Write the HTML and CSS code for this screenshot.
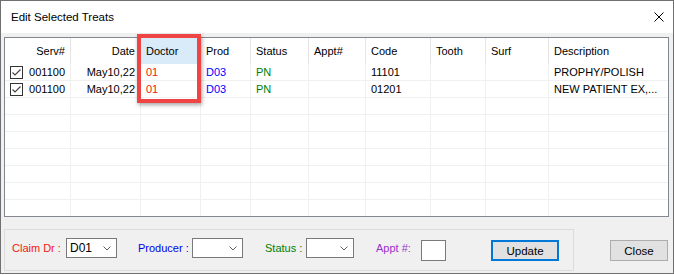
FILE: index.html
```html
<!DOCTYPE html>
<html>
<head>
<meta charset="utf-8">
<link rel="stylesheet" href="styles.css">
</head>
<body>
<div class="window">
  <div class="titlebar">
    <span class="title">Edit Selected Treats</span>
    <svg class="close-x" width="10" height="10" viewBox="0 0 10 10"><path d="M0.5 0.5 L9.5 9.5 M9.5 0.5 L0.5 9.5" stroke="#000" stroke-width="1" fill="none"/></svg>
  </div>
  <div class="content">
    <div class="grid">
      <div class="row header">
        <div class="cell right">Serv#</div>
        <div class="cell right">Date</div>
        <div class="cell sel">Doctor</div>
        <div class="cell">Prod</div>
        <div class="cell">Status</div>
        <div class="cell">Appt#</div>
        <div class="cell">Code</div>
        <div class="cell">Tooth</div>
        <div class="cell">Surf</div>
        <div class="cell">Description</div>
      </div>
      <div class="row">
        <div class="cell serv"><svg class="chk" width="13" height="13" viewBox="0 0 13 13"><rect x="0.5" y="0.5" width="12" height="12" fill="#fff" stroke="#333"/><path d="M2.5 6.5 L5 9 L10.5 3.5" stroke="#444" stroke-width="1.2" fill="none"/></svg><span>001100</span></div>
        <div class="cell right">May10,22</div>
        <div class="cell red">01</div>
        <div class="cell blue">D03</div>
        <div class="cell green">PN</div>
        <div class="cell"></div>
        <div class="cell">11101</div>
        <div class="cell"></div>
        <div class="cell"></div>
        <div class="cell">PROPHY/POLISH</div>
      </div>
      <div class="row">
        <div class="cell serv"><svg class="chk" width="13" height="13" viewBox="0 0 13 13"><rect x="0.5" y="0.5" width="12" height="12" fill="#fff" stroke="#333"/><path d="M2.5 6.5 L5 9 L10.5 3.5" stroke="#444" stroke-width="1.2" fill="none"/></svg><span>001100</span></div>
        <div class="cell right">May10,22</div>
        <div class="cell red">01</div>
        <div class="cell blue">D03</div>
        <div class="cell green">PN</div>
        <div class="cell"></div>
        <div class="cell">01201</div>
        <div class="cell"></div>
        <div class="cell"></div>
        <div class="cell">NEW PATIENT EX,...</div>
      </div>
      <div class="row"><div class="cell"></div><div class="cell"></div><div class="cell"></div><div class="cell"></div><div class="cell"></div><div class="cell"></div><div class="cell"></div><div class="cell"></div><div class="cell"></div><div class="cell"></div></div>
      <div class="row"><div class="cell"></div><div class="cell"></div><div class="cell"></div><div class="cell"></div><div class="cell"></div><div class="cell"></div><div class="cell"></div><div class="cell"></div><div class="cell"></div><div class="cell"></div></div>
      <div class="row"><div class="cell"></div><div class="cell"></div><div class="cell"></div><div class="cell"></div><div class="cell"></div><div class="cell"></div><div class="cell"></div><div class="cell"></div><div class="cell"></div><div class="cell"></div></div>
      <div class="row"><div class="cell"></div><div class="cell"></div><div class="cell"></div><div class="cell"></div><div class="cell"></div><div class="cell"></div><div class="cell"></div><div class="cell"></div><div class="cell"></div><div class="cell"></div></div>
      <div class="row"><div class="cell"></div><div class="cell"></div><div class="cell"></div><div class="cell"></div><div class="cell"></div><div class="cell"></div><div class="cell"></div><div class="cell"></div><div class="cell"></div><div class="cell"></div></div>
      <div class="row"><div class="cell"></div><div class="cell"></div><div class="cell"></div><div class="cell"></div><div class="cell"></div><div class="cell"></div><div class="cell"></div><div class="cell"></div><div class="cell"></div><div class="cell"></div></div>
      <div class="row"><div class="cell"></div><div class="cell"></div><div class="cell"></div><div class="cell"></div><div class="cell"></div><div class="cell"></div><div class="cell"></div><div class="cell"></div><div class="cell"></div><div class="cell"></div></div>
    </div>
    <div class="footer">
      <div class="groupbox">
        <span class="lbl lbl-claim">Claim Dr :</span>
        <div class="combo combo-claim"><span>D01</span><svg class="chev" width="8" height="5" viewBox="0 0 8 5"><path d="M0.5 0.5 L4 4 L7.5 0.5" stroke="#606060" fill="none"/></svg></div>
        <span class="lbl lbl-prod">Producer :</span>
        <div class="combo combo-prod"><span></span><svg class="chev" width="8" height="5" viewBox="0 0 8 5"><path d="M0.5 0.5 L4 4 L7.5 0.5" stroke="#606060" fill="none"/></svg></div>
        <span class="lbl lbl-status">Status :</span>
        <div class="combo combo-status"><span></span><svg class="chev" width="8" height="5" viewBox="0 0 8 5"><path d="M0.5 0.5 L4 4 L7.5 0.5" stroke="#606060" fill="none"/></svg></div>
        <span class="lbl lbl-appt">Appt #:</span>
        <div class="textbox"></div>
        <div class="btn btn-update">Update</div>
      </div>
      <div class="btn btn-close">Close</div>
    </div>
  </div>
  <div class="highlight"></div>
</div>
</body>
</html>
```
FILE: styles.css
```css
* { box-sizing: border-box; }
html, body { margin: 0; padding: 0; background: #fff; }
body { font-family: "Liberation Sans", Arial, sans-serif; font-size: 11px; color: #000; }

.window {
  position: relative;
  width: 674px;
  height: 274px;
  border: 1px solid #707070;
  background: #f0f0f0;
  display: flex;
  flex-direction: column;
}
.titlebar {
  flex: none;
  height: 32px;
  background: #fff;
  display: flex;
  align-items: center;
  justify-content: space-between;
  padding: 0 9px 0 10px;
}
.title { font-size: 11.5px; color: #000; }
.close-x { display: block; }

.content { padding: 4px 4px 0 3px; }
.grid {
  height: 180px;
  border: 1px solid #828790;
  background: #fff;
  overflow: hidden;
}
.row {
  display: grid;
  grid-template-columns: 66px 70px 60px 50px 58px 57px 65px 55px 63px 1fr;
  height: 17px;
}
.cell {
  border-right: 1px solid #f0f0f0;
  border-bottom: 1px solid #f0f0f0;
  padding: 0 5px;
  line-height: 16px;
  white-space: nowrap;
  overflow: hidden;
}
.row .cell:last-child { border-right: none; }
.header { height: 26px; }
.header .cell { line-height: 26px; border-bottom: none; border-right-color: #e5e5e5; }
.header .sel { background: #d9ebf9; }
.right { text-align: right; }
.serv { display: flex; align-items: center; justify-content: space-between; padding-left: 5px; }
.chk { display: block; }
.red { color: #f0200a; }
.blue { color: #0000ff; }
.green { color: #008000; }

.footer { display: flex; align-items: flex-start; margin-top: 12px; }
.groupbox {
  width: 570px;
  height: 42px;
  border: 1px solid #dcdcdc;
  display: flex;
  align-items: flex-start;
}
.lbl { margin-top: 8px; line-height: 20px; white-space: nowrap; }
.lbl-claim { margin-left: 7px; width: 54px; color: #f02010; }
.lbl-prod { margin-left: 21px; width: 54px; color: #0000ee; }
.lbl-status { margin-left: 22px; width: 41px; color: #008000; }
.lbl-appt { margin-left: 22px; width: 45px; color: #9932cc; }
.combo {
  margin-top: 8px;
  height: 20px;
  border: 1px solid #7a7a7a;
  background: #fff;
  display: flex;
  align-items: center;
  justify-content: space-between;
  padding: 0 5px 0 3px;
  font-size: 12px;
}
.combo-claim { width: 51px; }
.combo-prod { width: 51px; }
.combo-status { width: 48px; }
.chev { display: block; }
.textbox {
  margin-top: 10px;
  width: 25px;
  height: 21px;
  border: 1px solid #7a7a7a;
  background: #fff;
}
.btn {
  height: 21px;
  background: #e1e1e1;
  border: 1px solid #adadad;
  display: flex;
  align-items: center;
  justify-content: center;
  font-size: 11.5px;
}
.btn-update { margin-left: 45px; margin-top: 10px; width: 68px; border: 2px solid #0078d7; }
.btn-close { margin-left: 36px; margin-top: 11px; width: 58px; }

.highlight {
  position: absolute;
  left: 136px;
  top: 33px;
  width: 64px;
  height: 69px;
  border: 4px solid #ef4444;
  box-shadow: 1px 2px 4px rgba(0, 0, 0, 0.35);
}
```
